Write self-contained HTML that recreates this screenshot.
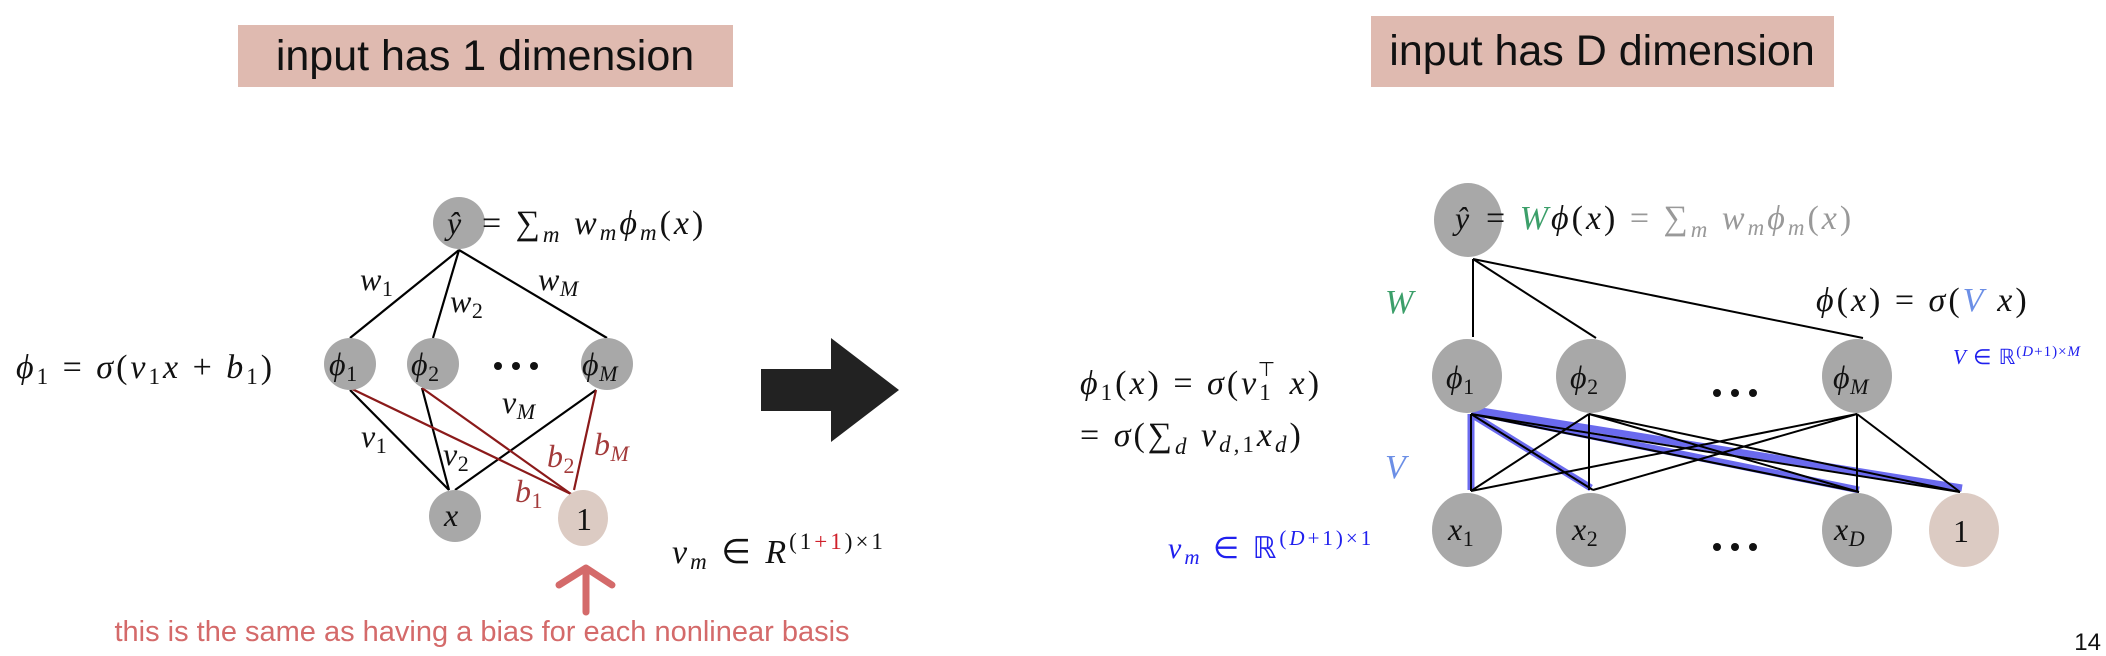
<!DOCTYPE html>
<html><head><meta charset="utf-8"><style>
html,body{margin:0;padding:0;background:#fff;}
svg{display:block;}
.m{font-family:"Liberation Serif",serif;font-style:italic;letter-spacing:3px;}
.n{letter-spacing:0.5px;}
.r{font-family:"Liberation Serif",serif;font-style:normal;}
.s{font-family:"Liberation Sans",sans-serif;}
</style></head><body>
<svg width="2106" height="656" viewBox="0 0 2106 656" xmlns="http://www.w3.org/2000/svg">
<rect width="2106" height="656" fill="#fff"/>
<rect x="238" y="25" width="495" height="62" fill="#dfbab0"/>
<text x="485" y="70" class="s" font-size="43" text-anchor="middle" fill="#111">input has 1 dimension</text>
<rect x="1371" y="16" width="463" height="71" fill="#dfbab0"/>
<text x="1602" y="65" class="s" font-size="43" text-anchor="middle" fill="#111">input has D dimension</text>

<g stroke="#000" stroke-width="2.2" fill="none">
<line x1="459" y1="250" x2="350" y2="338"/>
<line x1="459" y1="250" x2="433" y2="338"/>
<line x1="459" y1="250" x2="607" y2="338"/>
<line x1="350" y1="390" x2="449" y2="490"/>
<line x1="422" y1="388" x2="449" y2="490"/>
<line x1="596" y1="390" x2="455" y2="490"/>
</g>
<g stroke="#8b1a1a" stroke-width="2.2" fill="none">
<line x1="350" y1="388" x2="571" y2="494"/>
<line x1="422" y1="388" x2="571" y2="494"/>
<line x1="596" y1="390" x2="574" y2="490"/>
</g>
<g fill="#a8a8a8">
<circle cx="459" cy="223" r="26"/>
<circle cx="350" cy="364" r="26"/>
<circle cx="433" cy="364" r="26"/>
<circle cx="607" cy="364" r="26"/>
<circle cx="455" cy="516" r="26"/>
</g>
<ellipse cx="583" cy="518" rx="25" ry="28" fill="#dccbc3"/>
<g class="m n" font-size="32" fill="#111">
<text x="447" y="234">ŷ</text>
<text x="329" y="375">ϕ<tspan class="r" font-size="22" dy="6">1</tspan></text>
<text x="411" y="375">ϕ<tspan class="r" font-size="22" dy="6">2</tspan></text>
<text x="582" y="375">ϕ<tspan font-size="22" dy="6">M</tspan></text>
<text x="444" y="526">x</text>
<text x="360" y="290">w<tspan class="r" font-size="22" dy="6">1</tspan></text>
<text x="450" y="312">w<tspan class="r" font-size="22" dy="6">2</tspan></text>
<text x="538" y="290">w<tspan font-size="22" dy="6">M</tspan></text>
<text x="361" y="447">v<tspan class="r" font-size="22" dy="6">1</tspan></text>
<text x="443" y="465">v<tspan class="r" font-size="22" dy="6">2</tspan></text>
<text x="502" y="413">v<tspan font-size="22" dy="6">M</tspan></text>
</g>
<g class="m" font-size="34" fill="#111">
<text x="482" y="234"><tspan class="r">= ∑</tspan><tspan font-size="23" dy="8">m</tspan><tspan dy="-8"> w</tspan><tspan font-size="23" dy="6">m</tspan><tspan dy="-6">ϕ</tspan><tspan font-size="23" dy="6">m</tspan><tspan dy="-6" class="r">(</tspan>x<tspan class="r">)</tspan></text>
<text x="16" y="378">ϕ<tspan class="r" font-size="23" dy="6">1</tspan><tspan class="r" dy="-6">  =  </tspan>σ<tspan class="r">(</tspan>v<tspan class="r" font-size="23" dy="6">1</tspan><tspan dy="-6">x</tspan><tspan class="r">  +  </tspan>b<tspan class="r" font-size="23" dy="6">1</tspan><tspan class="r" dy="-6">)</tspan></text>
<text x="672" y="563">v<tspan font-size="23" dy="6">m</tspan><tspan class="r" dy="-6">  ∈  </tspan>R<tspan class="r" font-size="23" dy="-14">(1<tspan fill="#d0202a">+1</tspan>)×1</tspan></text>
</g>
<g class="m n" font-size="32" fill="#a33a3a">
<text x="547" y="467">b<tspan class="r" font-size="22" dy="6">2</tspan></text>
<text x="594" y="455">b<tspan font-size="22" dy="6">M</tspan></text>
<text x="515" y="502">b<tspan class="r" font-size="22" dy="6">1</tspan></text>
</g>
<text x="576" y="530" class="r" font-size="32" fill="#111">1</text>
<g fill="#111"><circle cx="498" cy="366" r="4"/><circle cx="516" cy="366" r="4"/><circle cx="534" cy="366" r="4"/></g>

<g stroke="#d46a6a" stroke-width="7" fill="none" stroke-linecap="round" stroke-linejoin="round">
<line x1="586" y1="612" x2="586" y2="571"/>
<polyline points="559,585 586,568 612,585"/>
</g>
<text x="482" y="641" class="s" font-size="29" text-anchor="middle" fill="#d46a6a">this is the same as having a bias for each nonlinear basis</text>

<polygon points="761,369 831,369 831,338 899,390 831,442 831,411 761,411" fill="#222"/>

<g stroke="#000" stroke-width="2" fill="none">
<line x1="1473" y1="259" x2="1473" y2="337"/>
<line x1="1473" y1="259" x2="1596" y2="338"/>
<line x1="1473" y1="259" x2="1863" y2="338"/>
</g>
<g stroke="#6a6aee" stroke-width="7" fill="none">
<line x1="1471" y1="414" x2="1471" y2="490"/>
<line x1="1471" y1="414" x2="1591" y2="488"/>
<line x1="1473" y1="412" x2="1859" y2="490"/>
<line x1="1475" y1="410" x2="1962" y2="488"/>
</g>
<g stroke="#000" stroke-width="2" fill="none">
<line x1="1471" y1="414" x2="1471" y2="491"/>
<line x1="1471" y1="414" x2="1593" y2="490"/>
<line x1="1471" y1="414" x2="1859" y2="492"/>
<line x1="1471" y1="414" x2="1960" y2="492"/>
<line x1="1589" y1="414" x2="1471" y2="491"/>
<line x1="1589" y1="414" x2="1589" y2="490"/>
<line x1="1589" y1="414" x2="1859" y2="492"/>
<line x1="1589" y1="414" x2="1960" y2="492"/>
<line x1="1857" y1="414" x2="1471" y2="491"/>
<line x1="1857" y1="414" x2="1593" y2="490"/>
<line x1="1857" y1="414" x2="1857" y2="492"/>
<line x1="1857" y1="414" x2="1960" y2="492"/>
</g>
<g fill="#a8a8a8">
<ellipse cx="1468" cy="220" rx="34" ry="37"/>
<ellipse cx="1467" cy="376" rx="35" ry="37"/>
<ellipse cx="1591" cy="376" rx="35" ry="37"/>
<ellipse cx="1857" cy="376" rx="35" ry="37"/>
<ellipse cx="1467" cy="530" rx="35" ry="37"/>
<ellipse cx="1591" cy="530" rx="35" ry="37"/>
<ellipse cx="1857" cy="530" rx="35" ry="37"/>
</g>
<ellipse cx="1964" cy="530" rx="35" ry="37" fill="#dccbc3"/>
<g fill="#111">
<circle cx="1717" cy="393" r="4"/><circle cx="1735" cy="393" r="4"/><circle cx="1753" cy="393" r="4"/>
<circle cx="1717" cy="547" r="4"/><circle cx="1735" cy="547" r="4"/><circle cx="1753" cy="547" r="4"/>
</g>
<g class="m n" font-size="32" fill="#111">
<text x="1455" y="229">ŷ</text>
<text x="1446" y="388">ϕ<tspan class="r" font-size="22" dy="6">1</tspan></text>
<text x="1570" y="388">ϕ<tspan class="r" font-size="22" dy="6">2</tspan></text>
<text x="1833" y="388">ϕ<tspan font-size="22" dy="6">M</tspan></text>
<text x="1448" y="540">x<tspan class="r" font-size="22" dy="6">1</tspan></text>
<text x="1572" y="540">x<tspan class="r" font-size="22" dy="6">2</tspan></text>
<text x="1834" y="540">x<tspan font-size="22" dy="6">D</tspan></text>
</g>
<g class="m" font-size="34" fill="#111">
<text x="1486" y="229"><tspan class="r">= </tspan><tspan fill="#3c9f6a">W</tspan>ϕ<tspan class="r">(</tspan>x<tspan class="r">)</tspan><tspan fill="#999"><tspan class="r">  =  ∑</tspan><tspan font-size="23" dy="8">m</tspan><tspan dy="-8"> w</tspan><tspan font-size="23" dy="6">m</tspan><tspan dy="-6">ϕ</tspan><tspan font-size="23" dy="6">m</tspan><tspan dy="-6" class="r">(</tspan>x<tspan class="r">)</tspan></tspan></text>
<text x="1816" y="311">ϕ<tspan class="r">(</tspan>x<tspan class="r">)  =  </tspan>σ<tspan class="r">(</tspan><tspan fill="#6c8fe6">V</tspan> x<tspan class="r">)</tspan></text>
<text x="1080" y="394">ϕ<tspan class="r" font-size="23" dy="6">1</tspan><tspan class="r" dy="-6">(</tspan>x<tspan class="r">)  =  </tspan>σ<tspan class="r">(</tspan>v<tspan class="r" font-size="23" dy="6">1</tspan><tspan class="r" font-size="20" dx="-16" dy="-24">⊤</tspan><tspan dy="18">  x</tspan><tspan class="r">)</tspan></text>
<text x="1080" y="446"><tspan class="r">=  </tspan>σ<tspan class="r">(∑</tspan><tspan font-size="23" dy="8">d</tspan><tspan dy="-8"> v</tspan><tspan font-size="23" dy="6">d,<tspan class="r">1</tspan></tspan><tspan dy="-6">x</tspan><tspan font-size="23" dy="6">d</tspan><tspan class="r" dy="-6">)</tspan></text>
</g>
<text x="1953" y="542" class="r" font-size="32" fill="#111">1</text>
<text x="1385" y="313" class="m" font-size="34" fill="#3c9f6a">W</text>
<text x="1385" y="478" class="m" font-size="34" fill="#6c8fe6">V</text>
<g class="m" fill="#2020ee">
<text x="1168" y="558" font-size="30">v<tspan font-size="21" dy="6">m</tspan><tspan class="r" dy="-6">  ∈  ℝ</tspan><tspan font-size="21" dy="-13"><tspan class="r">(</tspan>D<tspan class="r">+1)×1</tspan></tspan></text>
<text x="1953" y="364" font-size="21" style="letter-spacing:1px">V<tspan class="r"> ∈ ℝ</tspan><tspan font-size="15" dy="-8"><tspan class="r">(</tspan>D<tspan class="r">+1)×</tspan>M</tspan></text>
</g>
<text x="2101" y="650" class="s" font-size="24" text-anchor="end" fill="#111">14</text>
</svg>
</body></html>
